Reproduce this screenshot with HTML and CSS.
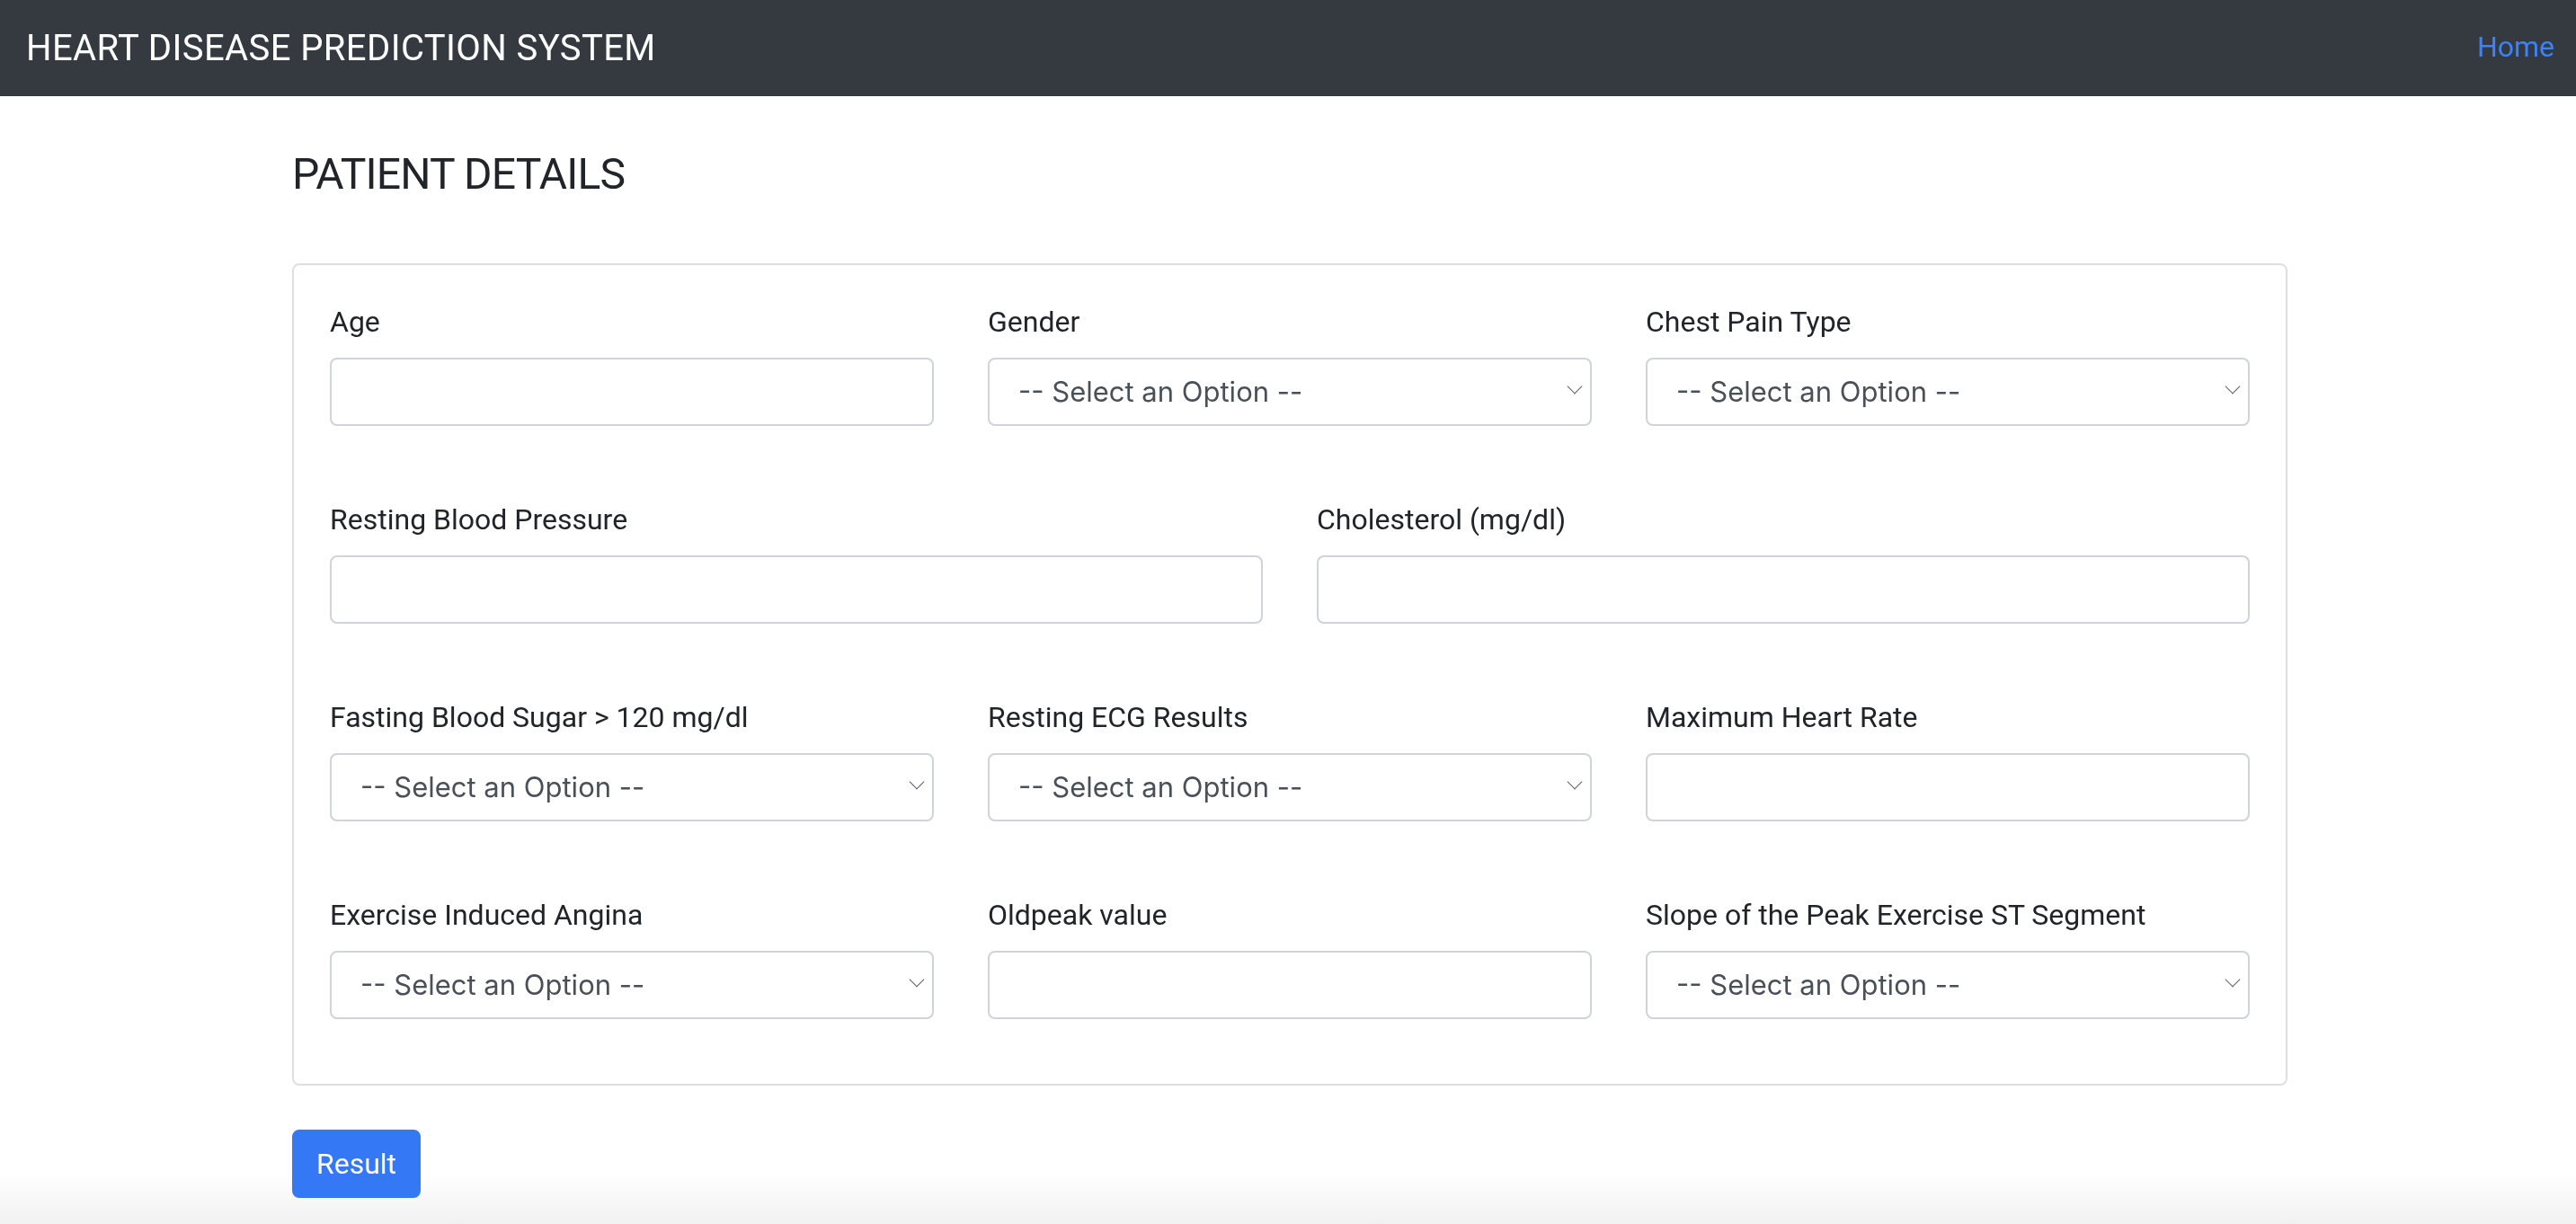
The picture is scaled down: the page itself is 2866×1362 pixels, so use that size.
FILE: index.html
```html
<!DOCTYPE html>
<html lang="en">
<head>
<meta charset="utf-8">
<title>Heart Disease Prediction System</title>
<link rel="stylesheet" href="styles.css">
</head>
<body>
<div class="bottom-shade"></div>
<nav class="navbar">
  <span class="brand">HEART DISEASE PREDICTION SYSTEM</span>
  <a class="nav-link" href="#">Home</a>
</nav>
<main class="container">
  <h4 class="page-title">PATIENT DETAILS</h4>
  <form class="card">
    <div class="row row-3">
      <div class="form-group">
        <label>Age</label>
        <input class="form-control" type="text">
      </div>
      <div class="form-group">
        <label>Gender</label>
        <div class="select-wrap"><select class="form-control"><option>-- Select an Option --</option></select></div>
      </div>
      <div class="form-group">
        <label>Chest Pain Type</label>
        <div class="select-wrap"><select class="form-control"><option>-- Select an Option --</option></select></div>
      </div>
    </div>
    <div class="row row-2">
      <div class="form-group">
        <label>Resting Blood Pressure</label>
        <input class="form-control" type="text">
      </div>
      <div class="form-group">
        <label>Cholesterol (mg/dl)</label>
        <input class="form-control" type="text">
      </div>
    </div>
    <div class="row row-3">
      <div class="form-group">
        <label>Fasting Blood Sugar &gt; 120 mg/dl</label>
        <div class="select-wrap"><select class="form-control"><option>-- Select an Option --</option></select></div>
      </div>
      <div class="form-group">
        <label>Resting ECG Results</label>
        <div class="select-wrap"><select class="form-control"><option>-- Select an Option --</option></select></div>
      </div>
      <div class="form-group">
        <label>Maximum Heart Rate</label>
        <input class="form-control" type="text">
      </div>
    </div>
    <div class="row row-3">
      <div class="form-group">
        <label>Exercise Induced Angina</label>
        <div class="select-wrap"><select class="form-control"><option>-- Select an Option --</option></select></div>
      </div>
      <div class="form-group">
        <label>Oldpeak value</label>
        <input class="form-control" type="text">
      </div>
      <div class="form-group">
        <label>Slope of the Peak Exercise ST Segment</label>
        <div class="select-wrap"><select class="form-control"><option>-- Select an Option --</option></select></div>
      </div>
    </div>
  </form>
  <button class="btn-primary" type="button">Result</button>
</main>
</body>
</html>
```
FILE: styles.css
```css
* { box-sizing: border-box; }

html {
  margin: 0;
  padding: 0;
  background: #ffffff;
}

body {
  margin: 0;
  padding: 0;
  font-family: Roboto, "Liberation Sans", Arial, sans-serif;
  font-size: 32px;
  line-height: 1.5;
  color: #212529;
  min-height: 1362px;
  overflow: hidden;
}

.bottom-shade {
  position: fixed;
  left: 0;
  right: 0;
  bottom: 0;
  height: 56px;
  z-index: -1;
  background: linear-gradient(to bottom, rgba(241,241,241,0), rgba(241,241,241,1));
  pointer-events: none;
}

.navbar {
  height: 107px;
  background: #343a40;
  display: flex;
  align-items: center;
  justify-content: space-between;
  padding: 0 24px 0 29px;
}

.brand {
  color: #ffffff;
  font-size: 40px;
  line-height: 60px;
  padding-top: 1px;
  letter-spacing: 0.4px;
}

.nav-link {
  color: #3b83f6;
  text-decoration: none;
  font-size: 32px;
  line-height: 48px;
  margin-top: -3px;
}

.container {
  width: 2220px;
  margin-left: calc(50% - 1108px);
  padding-top: 58px;
}

.page-title {
  margin: 0 0 70px 0;
  font-size: 48px;
  line-height: 57.6px;
  font-weight: 400;
  letter-spacing: -0.8px;
  color: #212529;
}

.card {
  border: 2px solid #dfdfdf;
  border-radius: 8px;
  padding: 39px 40px 40px 40px;
  display: flex;
  flex-direction: column;
  gap: 48px;
}

.row {
  display: grid;
  column-gap: 60px;
}

.row-3 { grid-template-columns: repeat(3, 1fr); }
.row-2 { grid-template-columns: repeat(2, 1fr); }

.form-group {
  margin-bottom: 32px;
  display: flex;
  flex-direction: column;
}

.form-group label {
  display: block;
  font-size: 32px;
  line-height: 48px;
  margin-bottom: 16px;
  color: #212529;
}

.form-control {
  display: block;
  width: 100%;
  height: 76px;
  border: 2px solid #ced4da;
  border-radius: 8px;
  background: #ffffff;
  font-family: Roboto, "Liberation Sans", Arial, sans-serif;
  font-size: 32px;
  color: #495057;
  padding: 0 24px;
  outline: none;
}

.select-wrap {
  position: relative;
}

select.form-control {
  appearance: none;
  -webkit-appearance: none;
  font-family: Inter, Roboto, "Liberation Sans", sans-serif;
  font-size: 31px;
  padding-left: 32px;
  padding-right: 48px;
}

.select-wrap::after {
  content: "";
  position: absolute;
  right: 13px;
  top: 26px;
  width: 11px;
  height: 11px;
  border-right: 1.6px solid #5f6368;
  border-bottom: 1.6px solid #5f6368;
  transform: rotate(45deg);
  pointer-events: none;
}

.btn-primary {
  margin-top: 49px;
  height: 76px;
  width: 143px;
  background: #3478f6;
  color: #ffffff;
  border: 2px solid #3478f6;
  border-radius: 8px;
  font-family: Roboto, "Liberation Sans", Arial, sans-serif;
  font-size: 32px;
  line-height: 48px;
  padding: 0;
}
```
